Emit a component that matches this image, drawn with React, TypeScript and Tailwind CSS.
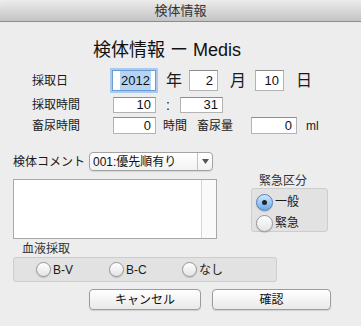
import React from 'react';

function Field({ value, className, focus }: { value: string; className: string; focus?: boolean }) {
  return (
    <div
      className={
        'flex items-center justify-end bg-white pr-[4px] text-[13px] text-[#111] ' +
        (focus
          ? 'border border-[#6d9ad0] shadow-[0_0_0_2px_#a9c9ee] '
          : 'border border-[#b3b3b3] border-t-[#8d8d8d] ') +
        className
      }
    >
      {focus ? <span className="bg-[#b5d3f5] px-[1px]">{value}</span> : value}
    </div>
  );
}

function Radio({ checked, size = 'w-[16px] h-[16px]' }: { checked?: boolean; size?: string }) {
  return (
    <span
      className={
        'flex shrink-0 items-center justify-center rounded-full border shadow-[0_1px_1px_rgba(0,0,0,0.15)] ' +
        size +
        (checked
          ? ' border-[#4f80bd] bg-linear-to-b from-[#d3e7fc] to-[#6aa8ea]'
          : ' border-[#969696] bg-linear-to-b from-white to-[#e4e4e4]')
      }
    >
      {checked && <span className="h-[5px] w-[5px] rounded-full bg-[#1c2633]" />}
    </span>
  );
}

function Button({ label, className }: { label: string; className: string }) {
  return (
    <div
      className={
        'flex h-[21px] items-center justify-center rounded-[4px] border border-[#9c9c9c] bg-linear-to-b from-white to-[#e9e9e9] text-[12px] text-[#111] shadow-[0_1px_1px_rgba(0,0,0,0.12)] ' +
        className
      }
    >
      {label}
    </div>
  );
}

export default function App() {
  return (
    <div className="flex h-[326px] w-[361px] flex-col overflow-hidden bg-[#ededed] font-['Liberation_Sans','Noto_Sans_CJK_JP',sans-serif] text-[#1a1a1a]">
      {/* title bar */}
      <div className="flex h-[22px] shrink-0 items-center justify-center rounded-t-[5px] border-b border-[#8c8c8c] bg-linear-to-b from-[#ececec] to-[#c4c4c4] text-[13px] leading-none text-[#333]">
        検体情報
      </div>

      <div className="flex flex-col px-[13px]">
        {/* heading */}
        <div className="mt-[16px] h-[24px] pl-[80px] text-[18px] leading-[24px] text-[#111]">
          検体情報 ー Medis
        </div>

        {/* 採取日 */}
        <div className="mt-[8px] flex h-[21px] items-center">
          <span className="w-[99px] pl-[19px] text-[12px]">採取日</span>
          <Field value="2012" focus className="h-[21px] w-[44px]" />
          <span className="ml-[10px] w-[16px] text-[16px] leading-none">年</span>
          <Field value="2" className="ml-[7px] h-[21px] w-[29px]" />
          <span className="ml-[12px] w-[14px] text-[16px] leading-none">月</span>
          <Field value="10" className="ml-[11px] h-[21px] w-[29px]" />
          <span className="ml-[12px] text-[16px] leading-none">日</span>
        </div>

        {/* 採取時間 */}
        <div className="mt-[6px] flex h-[16px] items-center">
          <span className="w-[100px] pl-[19px] text-[12px]">採取時間</span>
          <Field value="10" className="h-[16px] w-[43px]" />
          <span className="w-[24px] text-center text-[14px] leading-none">:</span>
          <Field value="31" className="h-[16px] w-[43px]" />
        </div>

        {/* 畜尿時間 */}
        <div className="mt-[4px] flex h-[17px] items-center">
          <span className="w-[100px] pl-[19px] text-[12px]">畜尿時間</span>
          <Field value="0" className="h-[17px] w-[43px]" />
          <span className="ml-[7px] w-[34px] text-[12px]">時間</span>
          <span className="w-[54px] text-[12px]">畜尿量</span>
          <Field value="0" className="h-[17px] w-[46px]" />
          <span className="ml-[9px] text-[12px]">ml</span>
        </div>

        {/* 検体コメント */}
        <div className="mt-[18px] flex h-[19px] items-center">
          <span className="w-[76px] text-[12px]">検体コメント</span>
          <div className="flex h-[19px] w-[124px] items-stretch rounded-[4px] border border-[#a3a3a3] bg-linear-to-b from-white to-[#f2f2f2] shadow-[0_1px_1px_rgba(0,0,0,0.1)]">
            <span className="flex w-[107px] items-center pl-[3px] text-[12px] text-[#111]">001:優先順有り</span>
            <span className="flex flex-1 items-center justify-center border-l border-[#c2c2c2]">
              <svg width="7" height="5" viewBox="0 0 7 5">
                <path d="M0 0 L7 0 L3.5 5 Z" fill="#555" />
              </svg>
            </span>
          </div>
        </div>

        {/* comment + 緊急区分 */}
        <div className="mt-[3px] flex items-start">
          <div className="mt-[5px] flex h-[60px] w-[204px] border border-[#a9a9a9] bg-white">
            <div className="flex-1" />
            <div className="w-[15px] border-l border-[#d6d6d6] bg-[#fafafa]" />
          </div>
          <div className="ml-[34px] flex w-[77px] flex-col">
            <span className="h-[14px] pl-[8px] text-[12px] leading-[14px] text-[#333]">緊急区分</span>
            <div className="flex h-[44px] flex-col gap-[3px] rounded-[3px] border border-[#cdcdcd] bg-[#e2e2e2] pl-[4px] pt-[4px]">
              <div className="flex items-center gap-[2px]">
                <Radio checked size="w-[17px] h-[17px]" />
                <span className="text-[12px]">一般</span>
              </div>
              <div className="flex items-center gap-[2px]">
                <Radio size="w-[17px] h-[17px]" />
                <span className="text-[12px]">緊急</span>
              </div>
            </div>
          </div>
        </div>

        {/* 血液採取 */}
        <span className="mt-[3px] h-[14px] pl-[9px] text-[12px] leading-[14px] text-[#333]">血液採取</span>
        <div className="mt-[1px] flex h-[25px] w-[264px] items-center rounded-[3px] border border-[#cdcdcd] bg-[#e2e2e2] pl-[22px]">
          <div className="flex w-[73px] items-center gap-[2px]">
            <Radio size="w-[15px] h-[15px]" />
            <span className="text-[12px]">B-V</span>
          </div>
          <div className="flex w-[73px] items-center gap-[2px]">
            <Radio size="w-[15px] h-[15px]" />
            <span className="text-[12px]">B-C</span>
          </div>
          <div className="flex items-center gap-[2px]">
            <Radio size="w-[15px] h-[15px]" />
            <span className="text-[12px]">なし</span>
          </div>
        </div>

        {/* buttons */}
        <div className="mt-[7px] flex">
          <Button label="キャンセル" className="ml-[76px] w-[112px]" />
          <Button label="確認" className="ml-[11px] w-[119px]" />
        </div>
      </div>
    </div>
  );
}
